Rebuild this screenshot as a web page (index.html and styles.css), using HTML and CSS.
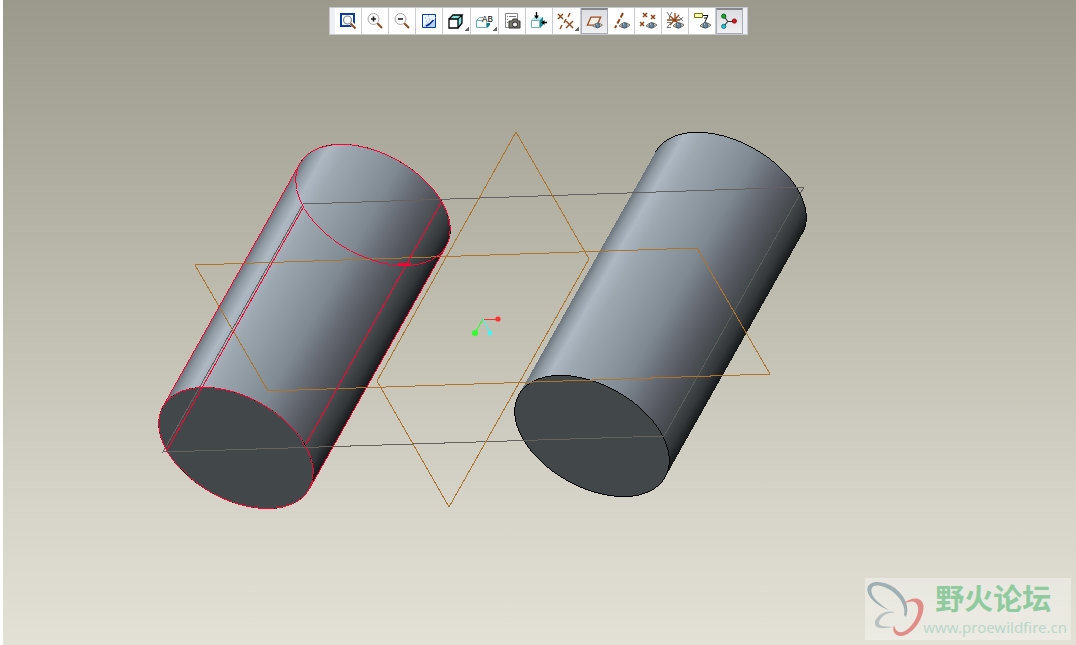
FILE: index.html
```html
<!DOCTYPE html>
<html lang="zh-CN">
<head>
  <meta charset="UTF-8">
  <meta name="viewport" content="width=device-width, initial-scale=1.0">
  <title>野火论坛</title>
  <link rel="stylesheet" href="styles.css">
</head>
<body>
  <main class="viewport">
    <svg class="scene" viewBox="3 0 1073 645" aria-hidden="true">
      <defs>
        <linearGradient id="steel" x1="0" y1="0" x2="1" y2="0">
          <stop offset="0" stop-color="#6c757d"/>
          <stop offset=".04" stop-color="#8f99a2"/>
          <stop offset=".1" stop-color="#aeb8c3"/>
          <stop offset=".2" stop-color="#9ca7b0"/>
          <stop offset=".38" stop-color="#8c979f"/>
          <stop offset=".52" stop-color="#7f8991"/>
          <stop offset=".65" stop-color="#686d76"/>
          <stop offset=".77" stop-color="#55575f"/>
          <stop offset=".86" stop-color="#454a4d"/>
          <stop offset=".94" stop-color="#323639"/>
          <stop offset="1" stop-color="#161819"/>
        </linearGradient>
        <path id="body" d="M-84 0V-279A84 51 0 0 1 84 -279V0Z"/>
        <path id="rim" d="M-84 -279A84 51 0 0 1 84 -279"/>
        <ellipse id="face" rx="84" ry="51"/>
      </defs>

      <!-- selected cylinder -->
      <g transform="translate(236 448) rotate(29.4)">
        <use href="#body" fill="url(#steel)"/>
        <use href="#face" class="face"/>
        <use href="#rim" class="edge"/>
      </g>

      <!-- second cylinder -->
      <g transform="translate(592 436) rotate(29.4)">
        <use href="#body" fill="url(#steel)"/>
        <use href="#face" class="face"/>
        <use href="#rim" class="edge"/>
      </g>

      <!-- datum planes -->
      <path class="plane-back" d="M664 436L163 452L303 204L804 187"/>
      <path class="plane-back dim" d="M804 187L664 436"/>
      <path class="plane" d="M195 265L697 248L770 374L268 391Z"/>
      <path class="plane" d="M516 132L589 259L449 507L377 381Z"/>

      <!-- selection outline -->
      <g class="picked" transform="translate(236 448) rotate(29.4)">
        <ellipse class="broken" rx="84" ry="51"/>
        <ellipse class="broken" rx="84" ry="51" cy="-279"/>
        <path d="M-84 0V-279M84 0V-279"/>
      </g>
      <path class="picked" d="M304 206L167 450M442 201L306 444"/>
      <path class="picked-end" d="M398 264H411"/>

      <!-- spin center -->
      <path class="axis-x" d="M483 319H498"/>
      <path class="axis-y" d="M483 319L475 333"/>
      <path class="axis-z" d="M483 319L490 333"/>
      <circle cx="498" cy="319" r="2.600" fill="#ff3030"/>
      <circle cx="475" cy="333" r="3" fill="#30ff30"/>
      <circle cx="490" cy="333" r="2.200" fill="#30ffff"/>
    </svg>

    <div class="toolbar" role="toolbar" aria-label="View">
      <button type="button" aria-label="Refit">
        <svg viewBox="0 0 26 26"><path d="M6 6h13v12H6z" fill="#fff" stroke="#0a3c9c" stroke-width="2"/><path d="M15 14l6 6" stroke="#fff" stroke-width="4"/><path d="M15.500 15.500l5 5" stroke="#8a4a20" stroke-width="2"/><circle cx="12.500" cy="12" r="4" fill="#f7f7f7" stroke="#888" stroke-width="1.200"/></svg>
      </button>
      <button type="button" aria-label="Zoom in">
        <svg viewBox="0 0 26 26"><path d="M15 15l5 5" stroke="#8a4a20" stroke-width="2"/><circle cx="11.500" cy="11" r="5.500" fill="#fafafa" stroke="#aaa"/><path d="M9 11h5M11.500 8.500v5" stroke="#222" stroke-width="1.600"/></svg>
      </button>
      <button type="button" aria-label="Zoom out">
        <svg viewBox="0 0 26 26"><path d="M15 15l5 5" stroke="#8a4a20" stroke-width="2"/><circle cx="11.500" cy="11" r="5.500" fill="#fafafa" stroke="#aaa"/><path d="M9 11h5" stroke="#222" stroke-width="1.600"/></svg>
      </button>
      <button type="button" aria-label="Repaint">
        <svg viewBox="0 0 26 26"><path d="M6.500 6.500h13v13h-13z" fill="#b5d3f0" stroke="#0a3c9c"/><path d="M7 7h12L7 19z" fill="#eef5fc"/><path d="M19 9l-6 6" stroke="#fff" stroke-width="2"/><path d="M17.500 12L13 16.500l-3 1.500" fill="none" stroke="#062a8c" stroke-width="1.600"/><path d="M9 10h1M12 8h1M10 13h1M13 11h1" stroke="#6d9dcc"/></svg>
      </button>
      <button type="button" class="menu" aria-label="Display style">
        <svg viewBox="0 0 26 26"><path d="M6 11l4-4h9v9l-4 4" fill="#7fe6e2"/><path d="M6 11h9v9H6z" fill="#fff"/><path d="M6 11h9v9H6zM6 11l4-4h9l-4 4M19 7v8l-4 5" fill="none" stroke="#000" stroke-width="1.300"/></svg>
      </button>
      <button type="button" class="menu" aria-label="Saved orientations">
        <svg viewBox="0 0 26 26"><path d="M12 9.500H8.500l-3 3v7h10v-5M5.500 12.500H12" fill="none" stroke="#69aeb5"/><path d="M16 15h3v2l-3 3z" fill="#087e88"/><text x="11" y="14" class="icon-text">AB</text></svg>
      </button>
      <button type="button" aria-label="View manager">
        <svg viewBox="0 0 26 26"><path d="M6.500 5.500h12v14h-12z" fill="#fff" stroke="#888"/><path d="M8 8.500h1M10 8.500h7M8 11.500h1M8 14.500h1" stroke="#777"/><path d="M10 13h3l1-2h4l1 2h2v7H10z" fill="#77756c" stroke="#333"/><circle cx="16" cy="16.500" r="2.600" fill="#eee" stroke="#222"/></svg>
      </button>
      <button type="button" aria-label="Orient view">
        <svg viewBox="0 0 26 26"><path d="M5 12l3-3h9v8l-3 3H5z" fill="#b5e4e8"/><path d="M5.500 12.500h8v7h-8z" fill="#fff" stroke="#74aeb5"/><path d="M14 12l3-3v8l-3 3z" fill="#168d98"/><path d="M10.500 4v6M21 14.500h-5" stroke="#000" stroke-width="1.300"/><path d="M8 7.500h5l-2.500 3.500zM18.500 12v5L15 14.500z" fill="#000"/></svg>
      </button>
      <button type="button" class="menu" aria-label="Datum display">
        <svg viewBox="0 0 26 26"><path d="M5 6l5 5M10 6l-5 5M13 13l7 7M20 13l-7 7M17 5l-2 4M13 11l-2 4M9 17l-2 4" fill="none" stroke="#914316" stroke-width="1.400"/></svg>
      </button>
      <button type="button" class="on" aria-label="Plane display" aria-pressed="true">
        <svg viewBox="0 0 26 26"><path d="M9 8h11l-4 9H5z" fill="#f7eee6" stroke="#9b4b1c" stroke-width="1.500"/><use href="#eye"/></svg>
      </button>
      <button type="button" aria-label="Axis display">
        <svg viewBox="0 0 26 26"><path d="M15 5L7 20" stroke="#914316" stroke-width="2" stroke-dasharray="5 2"/><use href="#eye"/></svg>
      </button>
      <button type="button" aria-label="Point display">
        <svg viewBox="0 0 26 26"><path d="M8 5l4 4M12 5l-4 4M16 7l4 4M20 7l-4 4M5 14l4 4M9 14l-4 4" stroke="#914316" stroke-width="1.500"/><use href="#eye"/></svg>
      </button>
      <button type="button" aria-label="Coordinate system display">
        <svg viewBox="0 0 26 26"><path d="M5 12h13M13 5v9M8 8l9 8M17 7l-9 10" stroke="#914316" stroke-width="1.300"/><path d="M5 4l2.500 4L10 4M7.500 8v3M17 9l4 4M21 9l-4 4M5 14.500h4l-4 5h4" fill="none" stroke="#777"/><use href="#eye"/></svg>
      </button>
      <button type="button" aria-label="Annotation display">
        <svg viewBox="0 0 26 26"><path d="M5.500 5.500h8v4h-8z" fill="#ffffae" stroke="#77750b"/><path d="M14 7.500h5L15 16M15 10h3" fill="none" stroke="#111"/><use href="#eye"/></svg>
      </button>
      <button type="button" class="on" aria-label="Spin center" aria-pressed="true">
        <svg viewBox="0 0 26 26"><path d="M7 7l4 6h7M11 13l-4 5" fill="none" stroke="#333" stroke-width="1.200"/><circle cx="6.500" cy="7" r="2.400" fill="#0ab52b" stroke="#064e12"/><circle cx="18.500" cy="12.500" r="2.400" fill="#e1181d" stroke="#7b080b"/><circle cx="6.500" cy="18.500" r="2.400" fill="#28c5d2" stroke="#076d78"/></svg>
      </button>
    </div>

    <a class="watermark" href="#">
      <svg class="logo" viewBox="0 0 60 62" aria-hidden="true">
        <path fill="#9fb0b5" d="M24 32C12 28 1 18 2.500 10C5 1 20 3 30 10C40 18 45 29 41 39L39 37C41 30 36 20 28 14C19 7 8 5 6.500 11C5 18 14 26 24 32Z"/>
        <path fill="#e28c88" d="M38 26C46 19 57 18 58.500 28C59 40 48 57 36 58C29 58 27 52 29 47C31 56 38 56 44 50C52 43 56 30 51 25C47 22 43 24 38 26Z"/>
        <path fill="#b9c0c0" d="M30 35C22 30 11 38 10 44C9 51 18 51 28 49C20 48 13 49 14 44C16 38 22 34 30 35Z"/>
      </svg>
      <span class="site">
        <span class="name">野火论坛</span>
        <span class="url">www.proewildfire.cn</span>
      </span>
    </a>
  </main>

  <svg class="sprites" aria-hidden="true">
    <defs>
      <g id="eye">
        <path d="M11 18Q16 12 22 17Q17 22 11 18Z" fill="#ddd6c8" stroke="#776c5a"/>
        <circle cx="16.500" cy="17.500" r="2.600" fill="#65849e" stroke="#44586a"/>
        <path d="M15 16h1" stroke="#dff"/>
      </g>
    </defs>
  </svg>
</body>
</html>
```
FILE: styles.css
```css
* {
  box-sizing: border-box;
}

body {
  margin: 0;
  padding-left: 3px;
  background: #fff;
  font-family: "Noto Sans", "Noto Sans CJK SC", sans-serif;
}

.viewport {
  display: grid;
  height: 100vh;
  background: linear-gradient(#9b988c, #aaa89b 20%, #c1bfb2 50%, #d6d4c8 78%, #e3e1d5);
}

.scene,
.toolbar,
.watermark {
  grid-area: 1 / 1;
}

.scene {
  width: 100%;
  height: 100%;
  min-height: 0;
  shape-rendering: crispEdges;
}

.scene circle {
  shape-rendering: auto;
}

.face {
  fill: #42474a;
  stroke: #000;
}

.edge {
  fill: none;
  stroke: #000;
}

.plane,
.plane-back {
  fill: none;
  stroke: #ad742f;
}

.plane-back {
  stroke: #65615e;
}

.dim {
  stroke: #5c5b5b;
}

.picked {
  fill: none;
  stroke: #ff0033;
}

.broken {
  stroke-dasharray: 20 1;
}

.picked-end {
  stroke: #ff0033;
  stroke-width: 3;
}

.axis-x {
  stroke: #ff3030;
}

.axis-y {
  stroke: #30ff30;
}

.axis-z {
  stroke: #30ffff;
}

/* toolbar */

.toolbar {
  display: flex;
  align-self: start;
  justify-self: center;
  margin: 7px 2px 0 0;
  padding: 0 4px 0 5px;
  border: 1px solid #c6c8ce;
  background: #eef0f5;
}

.toolbar button {
  width: 27px;
  height: 26px;
  padding: 0;
  border: 0;
  border-right: 1px solid #c8cbd3;
  background: #fff;
}

.toolbar button svg {
  display: block;
  width: 26px;
  height: 26px;
}

.toolbar .menu {
  width: 28px;
  background: linear-gradient(135deg, transparent 50%, #666 50%) right 1px bottom 3px / 4px 4px no-repeat #fff;
}

.toolbar .on {
  border: 1px solid #aaadb5;
  border-top: 2px solid #85878c;
  background: linear-gradient(#dcdde1, #f0f0f2);
}

.toolbar .on svg {
  width: 25px;
  height: 23px;
}

.icon-text {
  font: 9px "Liberation Mono", monospace;
}

/* watermark */

.watermark {
  display: flex;
  align-self: end;
  justify-self: end;
  height: 62px;
  margin: 0 5px 5px 0;
  padding-right: 4px;
  background: rgba(255, 255, 255, .35);
  text-decoration: none;
}

.logo {
  width: 60px;
  height: 62px;
}

.site {
  display: flex;
  flex-direction: column;
}

.name {
  padding-left: 10px;
  color: #8fcb9f;
  font: bold 29px/38px "Noto Sans CJK SC", sans-serif;
}

.url {
  margin-left: -2px;
  color: #b9d7ca;
  font-size: 15px;
  line-height: 22px;
}

.sprites {
  display: block;
  width: 0;
  height: 0;
}
```
